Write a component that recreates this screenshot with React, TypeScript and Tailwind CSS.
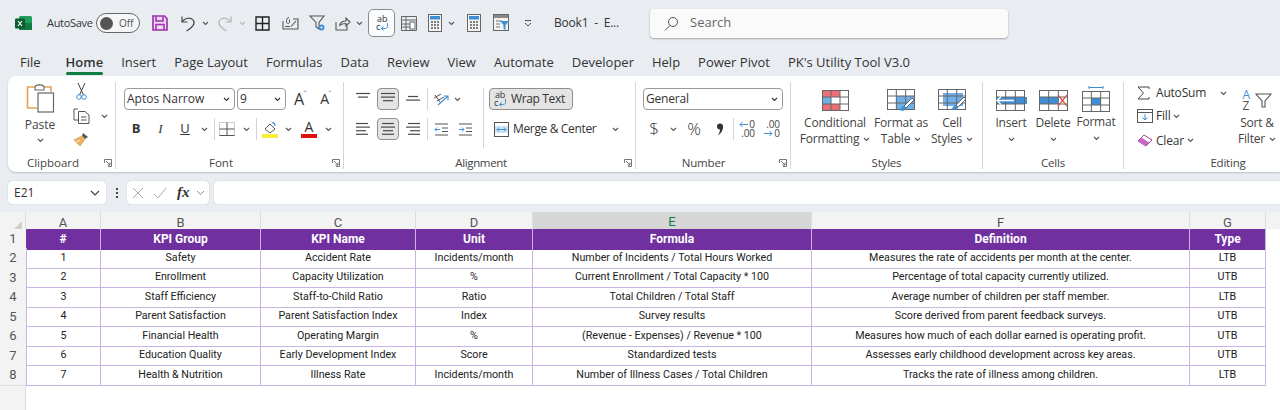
import React from "react";

const INK = "#4a4a4a";
const BLUE = "#3f8fd6";
const LBLUE = "#6fb0ea";

type P = { className?: string };

const Svg = ({ w, h, children, className }: { w: number; h: number; children: React.ReactNode; className?: string }) => (
  <svg width={w} height={h} viewBox={`0 0 ${w} ${h}`} fill="none" className={`block shrink-0 ${className ?? ""}`}>
    {children}
  </svg>
);

const Chev = ({ c = "#555" }: { c?: string }) => (
  <Svg w={7} h={5}>
    <path d="M1 1l2.5 2.5L6 1" stroke={c} strokeWidth="1.1" />
  </Svg>
);

const Cell = ({ className, children }: P & { children?: React.ReactNode }) => (
  <div className={`flex items-center justify-center shrink-0 ${className ?? ""}`}>{children}</div>
);

const Lines = ({ rows }: { rows: [number, number][] }) => (
  <Svg w={16} h={14}>
    {rows.map(([a, b], i) => (
      <path key={i} d={`M${a} ${1.5 + i * 3.6}H${b}`} stroke={INK} strokeWidth="1.2" />
    ))}
  </Svg>
);

const VDiv = ({ className }: P) => <div className={`w-px h-[22px] bg-[#d4d4d4] shrink-0 ${className ?? ""}`} />;

const Launcher = () => (
  <Svg w={8} h={8} className="mr-[3px]">
    <path d="M.5 4V.5H7.5V7.5H4" stroke="#666" strokeWidth=".9" />
    <path d="M2 2l4 4M6 3.5V6H3.5" stroke="#666" strokeWidth=".9" />
  </Svg>
);

const Label = ({ children, className, launcher }: P & { children: React.ReactNode; launcher?: boolean }) => (
  <div className="flex items-center h-[14px] mt-auto mb-[-1px]">
    <div className={`flex-1 text-center text-[11.5px] leading-[14px] text-[#444] ${className ?? ""}`}>{children}</div>
    {launcher && <Launcher />}
  </div>
);

const Combo = ({ text, className }: P & { text: string }) => (
  <div className={`h-[22px] shrink-0 rounded-[4px] border border-[#9a9a9a] bg-white flex items-center justify-between pl-[2px] pr-[4px] text-[12px] text-[#333] ${className ?? ""}`}>
    <span>{text}</span>
    <Chev c="#333" />
  </div>
);

const GridBase = ({ w = 28, h = 21, c = "#666" }: { w?: number; h?: number; c?: string }) => (
  <g stroke={c} strokeWidth="1">
    <rect x=".5" y=".5" width={w - 1} height={h - 1} />
    <path d={`M${w / 3} .5V${h - 0.5}M${(2 * w) / 3} .5V${h - 0.5}M.5 ${h / 3}H${w - 0.5}M.5 ${(2 * h) / 3}H${w - 0.5}`} />
  </g>
);

const Brush = ({ x, y }: { x: number; y: number }) => (
  <g transform={`translate(${x} ${y})`}>
    <path d="M13 0L15 2L7 10L5 8Z" fill="#fff" stroke="#555" strokeWidth=".9" />
    <path d="M5 8C2 8 2.5 11 0 12C3 13.5 7 13 7 10Z" fill={BLUE} />
  </g>
);

const StackIconCol = ({
  icon,
  l1,
  l2,
  className,
}: P & { icon: React.ReactNode; l1: string; l2?: string }) => (
  <div className={`flex flex-col items-center shrink-0 pt-[6px] ${className ?? ""}`}>
    <div className="h-[24px] flex items-center">{icon}</div>
    <div className="mt-[3px] text-[12px] leading-[16px] text-[#444] whitespace-nowrap">{l1}</div>
    <div className="text-[12px] leading-[16px] text-[#444] whitespace-nowrap flex items-center gap-[4px] h-[16px]">
      {l2 && <span>{l2}</span>}
      <Chev />
    </div>
  </div>
);

const WrapGlyph = () => (
  <div className="flex flex-col items-start text-[9px] leading-[8px] text-[#333] w-[15px] shrink-0">
    <span className="ml-[2px]">ab</span>
    <span className="flex items-center ml-[1px]">
      c
      <svg width="9" height="9" viewBox="0 0 9 9" fill="none">
        <path d="M7.5 0V3.500C7.5 5 6 5.500 5 5.500H1.500M3.500 3.500L1.500 5.500L3.500 7.500" stroke={BLUE} strokeWidth="1" />
      </svg>
    </span>
  </div>
);

const qatIcons = {
  excel: (
    <Svg w={17} h={16}>
      <rect x="4" y="1" width="13" height="14" rx="1.5" fill="#1f9e5c" />
      <rect x="4" y="8" width="13" height="7" fill="#107c41" />
      <rect x="0" y="3.5" width="10" height="10" rx="1" fill="#0b5c30" />
      <path d="M3 6l4 5M7 6l-4 5" stroke="#fff" strokeWidth="1.2" />
    </Svg>
  ),
  save: (
    <Svg w={16} h={16}>
      <path d="M1 1H12.5L15 3.5V15H1Z" fill="#f0d8f4" stroke="#9a2fa8" strokeWidth="1.6" />
      <path d="M4 1.5V6H11V1.5M4 15V9.5H12V15" stroke="#9a2fa8" strokeWidth="1.5" />
    </Svg>
  ),
  undo: (
    <Svg w={16} h={17}>
      <path d="M2 1.5V7H7.5" stroke="#444" strokeWidth="1.2" />
      <path d="M2.3 6.8C5 2.5 11 2 13.5 5.5C15.5 9 12 13 6.5 16" stroke="#444" strokeWidth="1.2" />
    </Svg>
  ),
  redo: (
    <Svg w={16} h={17}>
      <path d="M14 1.5V7H8.5" stroke="#b5b5b5" strokeWidth="1.2" />
      <path d="M13.7 6.8C11 2.5 5 2 2.5 5.5C.5 9 4 13 9.5 16" stroke="#b5b5b5" strokeWidth="1.2" />
    </Svg>
  ),
  grid: (
    <Svg w={15} h={15}>
      <path d="M1 1H14V14H1ZM7.5 1V14M1 7.5H14" stroke="#222" strokeWidth="1.4" />
    </Svg>
  ),
  mail: (
    <Svg w={17} h={15}>
      <path d="M1 5V13H16V3H11" stroke="#555" strokeWidth="1.1" />
      <path d="M7 1.5C4.5 1.5 4.5 4 4.5 6C4.5 8 7.5 8 7.5 6V3.5" stroke="#555" strokeWidth="1" />
      <path d="M9 10.5L14 5" stroke="#555" strokeWidth="1.1" />
      <path d="M3 10.5H8" stroke="#555" strokeWidth="1" />
    </Svg>
  ),
  filter: (
    <Svg w={17} h={17}>
      <path d="M1 1H15L10 7.5V14L7 12V7.5Z" stroke="#555" strokeWidth="1.1" />
      <circle cx="12.5" cy="12.5" r="3" fill={BLUE} />
      <circle cx="12.5" cy="12.5" r="1" fill="#fff" />
    </Svg>
  ),
  share: (
    <Svg w={16} h={15}>
      <path d="M1 6V14H12V10" stroke="#555" strokeWidth="1.1" />
      <path d="M4.5 10C5 6.5 8 5 11 5V2L15 6L11 10V7.5C8.5 7.5 6 8 4.5 10Z" stroke="#555" strokeWidth="1.1" />
    </Svg>
  ),
  form: (
    <Svg w={16} h={15}>
      <path d="M.5.5H15.5V14.5H.5ZM.5 4H15.5M5 .5V14.5M.5 8H9M.5 11H9" stroke="#666" />
      <rect x="9" y="6" width="5" height="7" fill="#fff" stroke="#666" />
    </Svg>
  ),
  calc: (
    <Svg w={14} h={18}>
      <rect x=".5" y=".5" width="13" height="17" fill="#f4f4f4" stroke="#666" />
      <rect x="2" y="2" width="10" height="3.5" fill={BLUE} />
      <path d="M3 8H5M6 8H8M9 8H11M3 11H5M6 11H8M9 11H11M3 14H5M6 14H8M9 14H11" stroke="#555" strokeWidth="1.6" />
    </Svg>
  ),
  sheetFilter: (
    <Svg w={17} h={18}>
      <rect x=".5" y=".5" width="15" height="16" fill="#f4f4f4" stroke="#666" />
      <rect x="1" y="1" width="14" height="3" fill="#888" />
      <path d="M3 7H9M3 10H7M3 13H7" stroke="#777" />
      <path d="M7 7H16L12.5 11V16L10.5 15V11Z" fill={BLUE} />
    </Svg>
  ),
};

const TitleBar = () => (
  <div className="h-[46px] shrink-0 flex items-center text-[#333] pl-[15px]">
    {qatIcons.excel}
    <span className="ml-[15px] w-[49px] text-[11px] tracking-[-0.3px]">AutoSave</span>
    <div className="w-[44px] h-[20px] rounded-full border border-[#666] flex items-center pl-[3px] bg-[#f4f6f8] shrink-0">
      <div className="w-[13px] h-[13px] rounded-full bg-[#555]" />
      <span className="ml-[6px] text-[10px] text-[#555]">Off</span>
    </div>
    <Cell className="ml-[12px] w-[16px]">{qatIcons.save}</Cell>
    <Cell className="ml-[12px] w-[16px]">{qatIcons.undo}</Cell>
    <Cell className="ml-[5px] w-[8px]"><Chev /></Cell>
    <Cell className="ml-[8px] w-[16px]">{qatIcons.redo}</Cell>
    <Cell className="ml-[5px] w-[8px]"><Chev c="#b5b5b5" /></Cell>
    <Cell className="ml-[9px] w-[15px]">{qatIcons.grid}</Cell>
    <Cell className="ml-[12px] w-[17px]">{qatIcons.mail}</Cell>
    <Cell className="ml-[10px] w-[17px]">{qatIcons.filter}</Cell>
    <Cell className="ml-[9px] w-[16px]">{qatIcons.share}</Cell>
    <Cell className="ml-[4px] w-[8px]"><Chev /></Cell>
    <div className="ml-[5px] w-[27px] h-[28px] rounded-[5px] border border-[#8a8a8a] bg-[#fbfcfd] flex items-center justify-center shrink-0 pl-[2px]">
      <WrapGlyph />
    </div>
    <Cell className="ml-[6px] w-[16px]">{qatIcons.form}</Cell>
    <Cell className="ml-[11px] w-[14px]">{qatIcons.calc}</Cell>
    <Cell className="ml-[5px] w-[8px]"><Chev /></Cell>
    <Cell className="ml-[12px] w-[14px]">{qatIcons.calc}</Cell>
    <Cell className="ml-[12px] w-[17px]">{qatIcons.sheetFilter}</Cell>
    <Cell className="ml-[14px] w-[8px]">
      <Svg w={8} h={7}>
        <path d="M1 .5H7M1 3L4 6L7 3" stroke="#555" strokeWidth="1" />
      </Svg>
    </Cell>
    <span className="ml-[22px] w-[96px] text-[12px] whitespace-pre text-[#333] tracking-[-0.2px]">Book1  -  E...</span>
    <div className="w-[358px] h-[29px] rounded-[4px] bg-[#fafafa] shadow-[0_1px_2px_rgba(0,0,0,0.3)] flex items-center pl-[14px] shrink-0">
      <Svg w={15} h={15}>
        <circle cx="9" cy="6" r="4.500" stroke="#555" strokeWidth="1" />
        <path d="M6 9.500L1 14.500" stroke="#555" strokeWidth="1" />
      </Svg>
      <span className="ml-[11px] text-[13px] text-[#666]">Search</span>
    </div>
  </div>
);

const tabs = ["File", "Home", "Insert", "Page Layout", "Formulas", "Data", "Review", "View", "Automate", "Developer", "Help", "Power Pivot", "PK's Utility Tool V3.0"];

const Tabs = () => (
  <div className="h-[30px] shrink-0 flex items-start pl-[20px] gap-[18px] text-[13px] text-[#333] pt-[7px]">
    {tabs.map((t) => (
      <div key={t} className={`relative leading-[18px] whitespace-nowrap ${t === "Home" ? "font-semibold -ml-[0px]" : ""} ${t === "File" ? "mr-[7px]" : ""}`}>
        {t}
        {t === "Home" && <div className="absolute left-0 right-0 top-[19px] h-[2.500px] rounded-full bg-[#107c41]" />}
      </div>
    ))}
  </div>
);

const Clipboard = () => (
  <div className="w-[108px] border-r border-[#d6d6d6] flex flex-col shrink-0">
    <div className="flex">
      <div className="w-[36px] ml-[14px] flex flex-col items-center pt-[1px]">
        <Svg w={29} h={30}>
          <path d="M9 4H1.500V25H11" stroke="#e5a35a" strokeWidth="1.6" />
          <path d="M18 4H25V9" stroke="#e5a35a" strokeWidth="1.6" />
          <path d="M9 4.500C9 1 18 1 18 4.500V7H9Z" fill="#fff" stroke="#666" strokeWidth="1.100" />
          <rect x="12" y="10" width="15.500" height="19" fill="#fff" stroke="#666" strokeWidth="1.200" />
        </Svg>
        <span className="mt-[4px] text-[12px] leading-[16px] text-[#444]">Paste</span>
        <div className="mt-[5px]"><Chev /></div>
      </div>
      <div className="ml-[8px] w-[42px] flex flex-col">
        <div className="h-[18px] pl-[10px] flex items-center">
          <Svg w={11} h={17}>
            <path d="M2 0L7.500 12M9 0L3.500 12" stroke="#444" strokeWidth="1" />
            <circle cx="3" cy="14" r="2.300" stroke={BLUE} />
            <circle cx="8" cy="14" r="2.300" stroke={BLUE} />
          </Svg>
        </div>
        <div className="h-[24px] mt-[4px] pl-[7px] flex items-center">
          <Svg w={17} h={16}>
            <path d="M5 1H1V12H5" stroke="#555" />
            <path d="M5.500 3.500H12L16 7V15.500H5.500ZM8 9H13.500M8 12H13.500" stroke="#555" />
          </Svg>
          <div className="ml-[11px]"><Chev /></div>
        </div>
        <div className="h-[22px] mt-[1px] pl-[7px] flex items-center">
          <Svg w={16} h={16}>
            <path d="M10 1L15 5L12 7L9 4Z" fill="#555" />
            <path d="M9 4L12 7L7 14L1 8Z" fill="#eeb25f" stroke="#c98d3c" strokeWidth=".6" />
            <path d="M3 10L7 8" stroke="#fff" strokeWidth=".8" />
          </Svg>
        </div>
      </div>
    </div>
    <Label launcher className="pr-[6px]">Clipboard</Label>
  </div>
);

const Font = () => (
  <div className="w-[228px] border-r border-[#d6d6d6] flex flex-col shrink-0">
    <div className="flex items-center mt-[6px] pl-[8px] h-[22px]">
      <Combo text="Aptos Narrow" className="w-[111px]" />
      <Combo text="9" className="ml-[2px] w-[49px]" />
      <Cell className="ml-[7px] w-[15px] text-[16px] text-[#333] leading-none">A<sup className="text-[9px] text-[#3f8fd6] -ml-[1px]">ˆ</sup></Cell>
      <Cell className="ml-[11px] w-[14px] text-[14px] text-[#333] leading-none">A<sup className="text-[9px] text-[#3f8fd6] -ml-[1px]">ˇ</sup></Cell>
    </div>
    <div className="flex items-center mt-[8px] pl-[8px] h-[22px] text-[#333]">
      <Cell className="w-[24px] text-[13px] font-bold" >B</Cell>
      <Cell className="w-[25px] text-[13px] italic [font-family:'Liberation_Serif',serif]">I</Cell>
      <Cell className="w-[24px] text-[13px] underline">U</Cell>
      <Cell className="w-[14px]"><Chev /></Cell>
      <VDiv className="ml-[3px]" />
      <Cell className="w-[24px]">
        <Svg w={16} h={14}>
          <path d="M.5.500H15.500V13.500H.5Z" stroke="#999" strokeDasharray="1 1" />
          <path d="M.5 13.500H15.500M8 .5V13.500M.5 7H15.500" stroke="#555" />
        </Svg>
      </Cell>
      <Cell className="w-[14px]"><Chev /></Cell>
      <VDiv className="ml-[3px]" />
      <Cell className="w-[26px]">
        <Svg w={16} h={17}>
          <path d="M3 8L8 3L13 8L8 12Z" stroke="#555" />
          <path d="M10 2C12 1 13 3 13 5" stroke={BLUE} strokeWidth="1.200" />
          <rect y="13" width="16" height="4" fill="#ffeb3b" />
        </Svg>
      </Cell>
      <Cell className="w-[10px]"><Chev /></Cell>
      <Cell className="ml-[3px] w-[26px] flex-col">
        <span className="text-[14px] leading-[13px] text-[#333]">A</span>
        <div className="w-[16px] h-[3.500px] mt-[1px] bg-[#e01010]" />
      </Cell>
      <Cell className="w-[12px]"><Chev /></Cell>
    </div>
    <Label launcher className="pr-[6px]">Font</Label>
  </div>
);

const Align = ({ rows, sel }: { rows: [number, number][]; sel?: boolean }) => (
  <Cell className={`w-[22px] h-[22px] rounded-[4px] ${sel ? "bg-[#e4e4e4] border border-[#8f8f8f]" : ""}`}>
    <Lines rows={rows} />
  </Cell>
);

const Alignment = () => (
  <div className="w-[292px] border-r border-[#d6d6d6] flex flex-col shrink-0 tracking-[-0.35px]">
    <div className="flex items-center mt-[6px] pl-[8px] h-[22px]">
      <Align rows={[[1, 15], [3, 13]]} />
      <div className="ml-[3px]"><Align sel rows={[[1, 15], [1, 15], [3, 13]]} /></div>
      <div className="ml-[3px] pt-[5px]"><Align rows={[[3, 13], [1, 15]]} /></div>
      <VDiv className="ml-[3px]" />
      <Cell className="ml-[3px] w-[20px]">
        <Svg w={17} h={13}>
          <path d="M1 5L8 1M4 8L11 4M2 2L7 9" stroke="#555" />
          <path d="M5 12L15 3M11 3H15V7" stroke={BLUE} strokeWidth="1.100" />
        </Svg>
      </Cell>
      <Cell className="w-[12px]"><Chev /></Cell>
      <VDiv className="ml-[20px] h-[60px] mt-[38px]" />
      <div className="ml-[5px] w-[84px] h-[22px] rounded-[4px] bg-[#e4e4e4] border border-[#8f8f8f] flex items-center pl-[3px] text-[12px] text-[#333] shrink-0">
        <WrapGlyph />
        <span className="ml-[3px] whitespace-nowrap">Wrap Text</span>
      </div>
    </div>
    <div className="flex items-center mt-[8px] pl-[8px] h-[22px]">
      <Align rows={[[1, 13], [1, 15], [1, 11], [1, 13]]} />
      <div className="ml-[3px]"><Align sel rows={[[2, 14], [1, 15], [3, 13], [2, 14]]} /></div>
      <div className="ml-[3px]"><Align rows={[[3, 15], [1, 15], [5, 15], [3, 15]]} /></div>
      <VDiv className="ml-[3px]" />
      <Cell className="ml-[1px] w-[24px]">
        <Svg w={15} h={13}>
          <path d="M1 1H14M8 5H14M8 8.500H14M1 12H14" stroke="#555" />
          <path d="M6 6.500H1M3 4.500L1 6.500L3 8.500" stroke={BLUE} />
        </Svg>
      </Cell>
      <Cell className="w-[25px]">
        <Svg w={15} h={13}>
          <path d="M1 1H14M8 5H14M8 8.500H14M1 12H14" stroke="#555" />
          <path d="M1 6.500H6M4 4.500L6 6.500L4 8.500" stroke={BLUE} />
        </Svg>
      </Cell>
      <div className="ml-[16px] flex items-center text-[12px] text-[#333]">
        <Svg w={15} h={15}>
          <rect x=".5" y=".5" width="14" height="14" stroke="#555" />
          <rect x="1" y="4" width="13" height="7" fill="#cfe4f7" />
          <path d="M3 7.500H12M5 5.500L3 7.500L5 9.500M10 5.500L12 7.500L10 9.500" stroke={BLUE} />
        </Svg>
        <span className="ml-[4px] w-[99px] whitespace-nowrap">Merge &amp; Center</span>
        <Chev />
      </div>
    </div>
    <Label launcher className="pr-[6px]">Alignment</Label>
  </div>
);

const DecIcon = ({ flip }: { flip?: boolean }) => (
  <div className="flex flex-col items-end text-[10px] leading-[9px] text-[#444]">
    <div className="flex items-center gap-[1px]">
      {flip ? <span>.00</span> : (<><svg width="9" height="7" viewBox="0 0 9 7" fill="none"><path d="M9 3.500H1M3.500 1L1 3.500L3.500 6" stroke={BLUE} /></svg><span>0</span></>)}
    </div>
    <div className="flex items-center gap-[1px]">
      {flip ? (<><svg width="9" height="7" viewBox="0 0 9 7" fill="none"><path d="M0 3.500H8M5.500 1L8 3.500L5.500 6" stroke={BLUE} /></svg><span>0</span></>) : <span>.00</span>}
    </div>
  </div>
);

const NumberG = () => (
  <div className="w-[155px] border-r border-[#d6d6d6] flex flex-col shrink-0 tracking-[-0.2px]">
    <div className="flex items-center mt-[6px] pl-[7px] h-[22px]">
      <Combo text="General" className="w-[140px]" />
    </div>
    <div className="flex items-center mt-[8px] pl-[8px] h-[22px] text-[#333]">
      <Cell className="w-[20px] text-[17px] font-light">$</Cell>
      <Cell className="w-[18px]"><Chev /></Cell>
      <Cell className="w-[24px] text-[17px] font-light">%</Cell>
      <Cell className="ml-[2px] w-[24px]">
        <Svg w={8} h={13}>
          <circle cx="4" cy="3.500" r="3" fill="#333" />
          <path d="M7 3.500C7 7 5.500 10 2 12.500C3.500 9.500 4 8 4 6Z" fill="#333" />
        </Svg>
      </Cell>
      <VDiv className="ml-[1px]" />
      <Cell className="ml-[2px] w-[22px]"><DecIcon /></Cell>
      <Cell className="ml-[3px] w-[22px]"><DecIcon flip /></Cell>
    </div>
    <Label launcher className="pr-[8px]">Number</Label>
  </div>
);

const Styles = () => (
  <div className="w-[192px] border-r border-[#d6d6d6] flex flex-col shrink-0 tracking-[-0.2px]">
    <div className="flex pl-[10px]">
      <StackIconCol
        className="w-[68px]"
        icon={
          <Svg w={27} h={21}>
            <rect x="0" y="0" width="18" height="7" fill="#ec6f78" />
            <rect x="0" y="7" width="9" height="7" fill={LBLUE} />
            <rect x="0" y="14" width="18" height="7" fill="#ec6f78" />
            <GridBase w={27} h={21} />
          </Svg>
        }
        l1="Conditional"
        l2="Formatting"
      />
      <StackIconCol
        className="ml-[4px] w-[56px]"
        icon={
          <Svg w={29} h={23}>
            <rect x="9" y="7" width="18" height="14" fill={LBLUE} />
            <GridBase w={28} h={21} />
            <Brush x={12} y={9} />
          </Svg>
        }
        l1="Format as"
        l2="Table"
      />
      <StackIconCol
        className="w-[46px]"
        icon={
          <Svg w={29} h={23}>
            <rect x="5" y="4" width="20" height="13" fill={LBLUE} />
            <GridBase w={28} h={21} />
            <Brush x={13} y={8} />
          </Svg>
        }
        l1="Cell"
        l2="Styles"
      />
    </div>
    <Label>Styles</Label>
  </div>
);

const Cells = () => (
  <div className="w-[141px] border-r border-[#d6d6d6] flex flex-col shrink-0 tracking-[-0.2px]">
    <div className="flex pl-[5px]">
      <StackIconCol
        className="w-[46px]"
        icon={
          <Svg w={31} h={21}>
            <rect x="1" y="7" width="30" height="7" fill={BLUE} />
            <GridBase w={29} h={21} />
            <path d="M18 10.500H1M5 6.500L1 10.500L5 14.500" stroke="#fff" strokeWidth="1.300" />
          </Svg>
        }
        l1="Insert"
      />
      <StackIconCol
        className="w-[38px]"
        icon={
          <Svg w={29} h={21}>
            <rect x="1" y="7" width="18" height="7" fill={BLUE} />
            <GridBase w={29} h={21} />
            <path d="M19 5L28 16M28 5L19 16" stroke="#e0564f" strokeWidth="1.200" />
          </Svg>
        }
        l1="Delete"
      />
      <StackIconCol
        className="w-[48px] -mt-[1px]"
        icon={
          <Svg w={28} h={26}>
            <path d="M7 1.500H21M7 0V3M21 0V3" stroke={BLUE} />
            <g transform="translate(0 5)">
              <rect x="9" y="7" width="10" height="7" fill={BLUE} />
              <GridBase w={28} h={21} />
            </g>
          </Svg>
        }
        l1="Format"
      />
    </div>
    <Label>Cells</Label>
  </div>
);

const Editing = () => (
  <div className="w-[208px] flex flex-col shrink-0 tracking-[-0.2px]">
    <div className="flex">
      <div className="ml-[13px] w-[100px] flex flex-col text-[12px] text-[#333] shrink-0">
        <div className="h-[22px] flex items-center">
          <Svg w={13} h={14} className="mr-[6px]">
            <path d="M12 3V1H1L6.500 7L1 13H12V11" stroke="#444" strokeWidth="1" />
          </Svg>
          <span>AutoSum</span>
          <div className="ml-auto mr-[10px]"><Chev /></div>
        </div>
        <div className="h-[24px] flex items-center">
          <Svg w={16} h={14} className="mr-[3px]">
            <rect x=".5" y=".5" width="15" height="13" stroke="#555" />
            <path d="M1 3.500H15" stroke="#555" />
            <path d="M8 5V11M5.500 8.500L8 11L10.500 8.500" stroke={BLUE} />
          </Svg>
          <span>Fill</span>
          <div className="ml-[3px]"><Chev /></div>
        </div>
        <div className="h-[25px] flex items-center">
          <Svg w={16} h={13} className="mr-[3px]">
            <path d="M1 7L7 1L15 6L9 12Z" fill="#fff" stroke="#a040a8" />
            <path d="M1 7L4.500 3.500L12 8.500L9 12Z" fill="#c968c8" />
          </Svg>
          <span>Clear</span>
          <div className="ml-[3px]"><Chev /></div>
        </div>
      </div>
      <StackIconCol
        className="w-[40px]"
        icon={
          <div className="flex items-center">
            <div className="flex flex-col text-[12px] leading-[11px] w-[12px]">
              <span className="text-[#3f8fd6]">A</span>
              <span className="text-[#555]">Z</span>
            </div>
            <Svg w={17} h={15}>
              <path d="M1 1H16L10 8V14H7V8Z" stroke="#555" strokeWidth="1.100" />
            </Svg>
          </div>
        }
        l1="Sort &"
        l2="Filter"
      />
    </div>
    <Label>Editing</Label>
  </div>
);

const Ribbon = () => (
  <div className="ml-[8px] h-[96px] shrink-0 pt-[6px] pb-[3px] bg-white rounded-l-[8px] shadow-[0_1px_2px_rgba(0,0,0,0.2)] flex">
    <Clipboard />
    <Font />
    <Alignment />
    <NumberG />
    <Styles />
    <Cells />
    <Editing />
  </div>
);

const FormulaBar = () => (
  <div className="mt-[9px] h-[23px] shrink-0 flex items-stretch pl-[8px]">
    <div className="w-[98px] rounded-[4px] bg-white flex items-center justify-between pl-[6px] pr-[6px] text-[12px] text-[#333] shadow-[0_0_1px_rgba(0,0,0,0.3)]">
      <span>E21</span>
      <Svg w={10} h={6}><path d="M1 1L5 5L9 1" stroke="#444" strokeWidth="1.200" /></Svg>
    </div>
    <div className="w-[21px] flex flex-col items-center justify-center gap-[2px]">
      <div className="w-[2px] h-[2px] bg-[#444]" />
      <div className="w-[2px] h-[2px] bg-[#444]" />
      <div className="w-[2px] h-[2px] bg-[#444]" />
    </div>
    <div className="w-[82px] rounded-[4px] bg-white flex items-center pl-[5px] shadow-[0_0_1px_rgba(0,0,0,0.3)]">
      <Svg w={12} h={12}><path d="M1 1L11 11M11 1L1 11" stroke="#aaa" /></Svg>
      <Svg w={14} h={12} className="ml-[9px]"><path d="M1 7L5 11L13 1" stroke="#aaa" /></Svg>
      <span className="ml-[10px] w-[17px] text-[15px] italic font-bold text-[#333] [font-family:'Liberation_Serif',serif]">fx</span>
      <Svg w={9} h={6} className="ml-[2px]"><path d="M1 1L4.500 4.500L8 1" stroke="#888" /></Svg>
    </div>
    <div className="ml-[5px] flex-1 rounded-l-[4px] bg-white shadow-[0_0_1px_rgba(0,0,0,0.3)]" />
  </div>
);

const rows = [
  ["1", "Safety", "Accident Rate", "Incidents/month", "Number of Incidents / Total Hours Worked", "Measures the rate of accidents per month at the center.", "LTB"],
  ["2", "Enrollment", "Capacity Utilization", "%", "Current Enrollment / Total Capacity * 100", "Percentage of total capacity currently utilized.", "UTB"],
  ["3", "Staff Efficiency", "Staff-to-Child Ratio", "Ratio", "Total Children / Total Staff", "Average number of children per staff member.", "LTB"],
  ["4", "Parent Satisfaction", "Parent Satisfaction Index", "Index", "Survey results", "Score derived from parent feedback surveys.", "UTB"],
  ["5", "Financial Health", "Operating Margin", "%", "(Revenue - Expenses) / Revenue * 100", "Measures how much of each dollar earned is operating profit.", "UTB"],
  ["6", "Education Quality", "Early Development Index", "Score", "Standardized tests", "Assesses early childhood development across key areas.", "UTB"],
  ["7", "Health & Nutrition", "Illness Rate", "Incidents/month", "Number of Illness Cases / Total Children", "Tracks the rate of illness among children.", "LTB"],
];
const heads = ["#", "KPI Group", "KPI Name", "Unit", "Formula", "Definition", "Type"];
const cols = ["A", "B", "C", "D", "E", "F", "G"];
const GRID = "grid grid-cols-[26px_75px_160px_155px_117px_279px_378px_76px_1fr]";

const Sheet = () => (
  <div className="mt-[8px] bg-white flex-1 min-h-0 overflow-hidden [font-family:Roboto,sans-serif]">
    <div className={`${GRID} h-[17px] bg-[#f3f3f3] text-[13px] text-[#555]`}>
      <div className="flex items-end justify-end pr-[3px] pb-[2px] border-r border-[#dcdcdc]">
        <div className="w-0 h-0 border-l-[11px] border-l-transparent border-b-[11px] border-b-[#cfcfcf]" />
      </div>
      {cols.map((c) => (
        <div
          key={c}
          className={`flex items-center justify-center border-r border-[#dcdcdc] ${c === "E" ? "bg-[#d6d6d6] border-b-2 border-b-[#107c41] text-[#107c41]" : ""}`}
        >
          {c}
        </div>
      ))}
      <div />
    </div>
    <div className={`${GRID} h-[19px] text-[12px] font-bold text-white`}>
      <div className="bg-[#f3f3f3] text-[#555] text-[13px] font-normal flex items-center justify-center border-b border-[#dcdcdc]">1</div>
      {heads.map((h) => (
        <div key={h} className="bg-[#7030a0] border-r border-[#c9b4e8] flex items-center justify-center">
          {h}
        </div>
      ))}
      <div />
    </div>
    {rows.map((r, i) => (
      <div key={i} className={`${GRID} h-[19.500px] text-[10.700px] text-[#222]`}>
        <div className="bg-[#f3f3f3] text-[#555] text-[13px] flex items-center justify-center border-b border-[#dcdcdc]">{i + 2}</div>
        {r.map((v, j) => (
          <div key={j} className={`flex items-center justify-center border-b border-r border-[#c9b4e8] whitespace-nowrap ${j === 0 ? "border-l" : ""}`}>
            {v}
          </div>
        ))}
        <div />
      </div>
    ))}
    <div className="w-[26px] h-[30px] bg-[#f3f3f3] border-r border-[#dcdcdc]" />
  </div>
);

export default function App() {
  return (
    <div className="w-[1280px] h-[410px] overflow-hidden bg-[#e9edf2] flex flex-col [font-family:'Open_Sans','Noto_Sans',sans-serif]">
      <TitleBar />
      <Tabs />
      <Ribbon />
      <FormulaBar />
      <Sheet />
    </div>
  );
}
